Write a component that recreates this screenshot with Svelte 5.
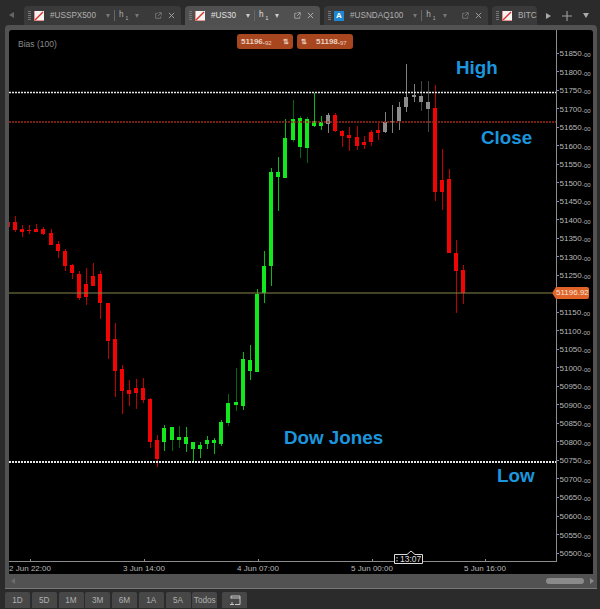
<script>
  // each candle: wick top, body top, body bottom, wick bottom (page pixels)
  const raw = [
    [221, 222, 227, 228], [216, 222, 230, 232], [225, 229, 232, 237], [225, 230, 231, 234], [224, 229, 232, 232],
    [227, 229, 234, 235], [229, 233, 245, 245], [241, 244, 251, 258], [249, 251, 266, 271], [264, 265, 273, 279],
    [271, 274, 298, 300], [268, 284, 297, 305], [263, 276, 286, 286], [271, 274, 303, 319], [303, 303, 341, 359],
    [323, 339, 371, 397], [365, 369, 391, 414], [380, 390, 394, 406], [379, 388, 393, 409], [378, 388, 400, 403],
    [398, 399, 442, 448], [435, 440, 459, 467], [425, 428, 442, 451], [427, 427, 440, 451], [426, 437, 440, 448],
    [427, 437, 444, 452], [442, 442, 449, 462], [442, 445, 449, 458], [436, 440, 444, 449], [438, 440, 443, 454],
    [420, 422, 444, 446], [394, 403, 423, 426], [368, 402, 405, 411], [352, 359, 406, 410], [345, 360, 371, 380],
    [289, 294, 372, 372], [251, 266, 293, 303], [168, 172, 266, 286], [157, 172, 177, 211], [119, 138, 178, 178],
    [100, 119, 140, 142], [116, 118, 147, 158], [117, 119, 148, 163], [93, 121, 126, 127], [116, 122, 126, 130],
    [113, 115, 124, 133], [113, 115, 131, 132], [130, 131, 136, 147], [127, 135, 138, 151], [126, 137, 146, 150],
    [136, 142, 145, 149], [130, 132, 142, 146], [123, 130, 133, 140], [112, 122, 132, 133], [105, 121, 122, 133],
    [102, 107, 121, 130], [64, 97, 107, 112], [84, 95, 97, 102], [81, 96, 102, 111], [81, 102, 109, 132],
    [85, 108, 192, 201], [149, 180, 192, 210], [169, 179, 253, 253], [240, 253, 271, 313], [265, 270, 293, 304]
  ];

  const dim = new Set([23, 24, 31, 32, 40, 41, 42, 58, 59]);

  function colour(i) {
    if (i <= 21) return 'red';
    if (i <= 44) return 'green';
    if (i === 45) return 'gray';
    if (i <= 52) return 'red';
    if (i <= 59) return 'gray';
    return 'red';
  }

  const candles = raw.map((c, i) => ({
    x: Math.round(7.9 + 7.116 * i),
    wt: c[0], bt: c[1], bb: c[2], wb: c[3],
    kind: colour(i),
    dim: dim.has(i)
  }));

  // 51200 sits behind the last price tag, so it isn't drawn
  const prices = Array.from({ length: 28 }, (_, i) => ({
    label: 51850 - i * 50,
    y: 53 + i * 18.52
  })).filter((p) => p.label !== 51200);

  const times = [
    { x: 30, label: '2 Jun 22:00' },
    { x: 144, label: '3 Jun 14:00' },
    { x: 258, label: '4 Jun 07:00' },
    { x: 372, label: '5 Jun 00:00' },
    { x: 485, label: '5 Jun 16:00' }
  ];

  const ranges = ['1D', '5D', '1M', '3M', '6M', '1A', '5A', 'Todos'];
</script>

{#snippet flag()}
  <svg class="icon" viewBox="0 0 10 10">
    <rect width="10" height="10" fill="#f4f4f4" />
    <path d="M0 0V10H10" fill="none" stroke="#d8342c" stroke-width="1" />
    <path d="M1 9L9 1" stroke="#d8342c" stroke-width="1.4" />
  </svg>
{/snippet}

{#snippet grip()}
  <span class="grip"></span>
{/snippet}

{#snippet period()}
  <span class="sep"></span>
  <span class="period">h<sub>1</sub></span>
  <span class="caret"></span>
{/snippet}

{#snippet actions()}
  <svg class="act" viewBox="0 0 8 8">
    <path d="M3 1.5H.8V7.2H6.5V5M4 .8H7.2V4M7 1L3.5 4.5" fill="none" stroke="currentColor" stroke-width=".8" />
  </svg>
  <svg class="act close" viewBox="0 0 8 8">
    <path d="M1 1L7 7M7 1L1 7" stroke="currentColor" stroke-width="1" />
  </svg>
{/snippet}

<div class="app">
  <div class="tabs">
    <span class="nav-left"></span>
    <div class="tab first">
      {@render grip()}
      {@render flag()}
      <span class="name">#USSPX500</span>
      <span class="caret"></span>
      {@render period()}
      <span class="grow"></span>
      {@render actions()}
    </div>
    <div class="tab active">
      {@render grip()}
      {@render flag()}
      <span class="name">#US30</span>
      <span class="caret"></span>
      {@render period()}
      <span class="grow"></span>
      {@render actions()}
    </div>
    <div class="tab third">
      {@render grip()}
      <span class="icon a-icon">A</span>
      <span class="name">#USNDAQ100</span>
      <span class="caret"></span>
      {@render period()}
      <span class="grow"></span>
      {@render actions()}
    </div>
    <div class="tab last">
      {@render grip()}
      {@render flag()}
      <span class="name">BITC</span>
    </div>
    <div class="tab-tools">
      <span class="play"></span>
      <svg class="plus" viewBox="0 0 10 10"><path d="M5 0V10M0 5H10" stroke="#a0a0a0" stroke-width="1.1" /></svg>
      <span class="drop"></span>
    </div>
  </div>

  <div class="panel">
    <div class="chart">
      <svg class="plot" viewBox="9 30 584 544" width="584" height="544">
        {#each candles as c}
          <rect x={c.x} y={c.wt} width="1" height={c.wb - c.wt} class="wick {c.kind}" class:dim={c.dim} />
          <rect x={c.x - 2} y={c.bt} width="4" height={Math.max(c.bb - c.bt, 1)} class="body {c.kind}" />
        {/each}

        <line x1="9" x2="556" y1="92.5" y2="92.5" class="dots white" />
        <line x1="9" x2="556" y1="122" y2="122" class="dots dark-red" />
        <line x1="9" x2="556" y1="462" y2="462" class="dots white thick" />
        <line x1="9" x2="552" y1="293" y2="293" class="last-price" />

        <line x1="556.5" x2="556.5" y1="30" y2="561.5" class="axis" />
        <line x1="9" x2="557" y1="561.5" y2="561.5" class="axis" />

        {#each prices as p}
          <line x1="557" x2="559" y1={p.y} y2={p.y} class="axis" />
          <text x="559.5" y={p.y + 3} class="tick">{p.label}.<tspan class="cents" dy="1">00</tspan></text>
        {/each}

        {#each times as t}
          <line x1={t.x} x2={t.x} y1="559" y2="562" class="axis" />
          <text x={t.x} y="571" class="tick middle">{t.label}</text>
        {/each}

        <text x="456" y="74" class="note">High</text>
        <text x="481" y="144" class="note">Close</text>
        <text x="284" y="444" class="note">Dow Jones</text>
        <text x="497" y="482" class="note">Low</text>

        <path d="M394.5 554.5H407L411 551L415 554.5H422.5V563.5H394.5Z" class="cross" />
        <path d="M397 557V558.5M397 560V561.5" stroke="#ddd" />
        <text x="400" y="562" class="cross-time">13:07</text>
      </svg>

      <span class="bias">Bias (100)</span>

      <div class="quotes">
        <div class="quote">51196.<small>92</small><i>⇅</i></div>
        <div class="quote"><i>⇅</i>51198.<small>97</small></div>
      </div>

      <div class="last-tag">51196.92</div>
    </div>

    <div class="scroll">
      <span class="arrow-left"></span>
      <span class="grow"></span>
      <span class="thumb"></span>
      <span class="arrow-right"></span>
    </div>
  </div>

  <div class="footer">
    {#each ranges as r}
      <button>{r}</button>
    {/each}
    <button class="calendar" aria-label="calendar">
      <svg viewBox="0 0 12 11" width="12" height="11">
        <path d="M2 3.5V1H11V9.5H6M2 3H11" fill="none" stroke="#c8c8c8" stroke-width="1" />
        <path d="M1 9.5H5M3 7V10" stroke="#c8c8c8" stroke-width="1" />
      </svg>
    </button>
  </div>
</div>

<style>
  :global(body) {
    margin: 0;
    background: #2b2b2b;
  }

  .app {
    width: 600px;
    height: 609px;
    display: flex;
    flex-direction: column;
    overflow: hidden;
    font-family: "Liberation Sans", Arial, sans-serif;
    color: #aaa;
  }

  .tabs {
    height: 25px;
    flex: none;
    display: flex;
    align-items: flex-end;
    gap: 4px;
    position: relative;
  }

  .nav-left {
    position: absolute;
    left: 9px;
    top: 12px;
    border: 3.5px solid transparent;
    border-right: 5px solid #666;
    border-left: 0;
  }

  .tab {
    height: 19px;
    display: flex;
    align-items: center;
    background: #3a3a3a;
    border-radius: 4px 4px 0 0;
    box-sizing: border-box;
    padding: 0 6px 0 4px;
    font-size: 8.2px;
    color: #b0b0b0;
    overflow: hidden;
    white-space: nowrap;
  }

  .first {
    margin-left: 24px;
    width: 157px;
  }

  .active {
    width: 135px;
    background: #505050;
    color: #e0e0e0;
  }

  .third {
    width: 164px;
  }

  .last {
    width: 45px;
    padding-right: 0;
  }

  .grip {
    width: 3px;
    height: 9px;
    flex: none;
    margin-right: 3px;
    background: repeating-linear-gradient(#777 0 1px, transparent 1px 2px);
  }

  .icon {
    width: 10px;
    height: 10px;
    flex: none;
    margin-right: 6px;
  }

  .a-icon {
    background: #1f86d2;
    color: #fff;
    font-size: 8px;
    font-weight: bold;
    line-height: 10px;
    text-align: center;
  }

  .name {
    flex: none;
    margin-right: 7px;
  }

  .caret {
    width: 0;
    height: 0;
    margin: 0 3px;
    border: 2.5px solid transparent;
    border-top: 4px solid #777;
    border-bottom: 0;
  }

  .active .caret {
    border-top-color: #ccc;
  }

  .sep {
    width: 1px;
    height: 11px;
    margin: 0 4px 0 1px;
    background: #666;
  }

  .period {
    margin-right: 4px;
  }

  .period sub {
    font-size: 5px;
    margin-left: 2px;
  }

  .grow {
    flex: 1;
  }

  .act {
    width: 7px;
    height: 7px;
    margin-left: 6px;
    color: #888;
  }

  .close {
    color: #aaa;
  }

  .active .act {
    color: #bbb;
  }

  .tab-tools {
    flex: 1;
    height: 19px;
    display: flex;
    align-items: center;
    padding-left: 5px;
    gap: 10px;
  }

  .play {
    border: 3.5px solid transparent;
    border-left: 5px solid #aaa;
    border-right: 0;
  }

  .plus {
    width: 10px;
    height: 10px;
    margin-left: 1px;
  }

  .drop {
    margin-left: 1px;
    border: 3px solid transparent;
    border-top: 5px solid #aaa;
    border-bottom: 0;
  }

  .panel {
    flex: none;
    margin: 0 3px 0 5px;
    padding: 5px 4px 0;
    background: #525252;
    border-radius: 4px 4px 0 0;
    border-bottom: 1px solid #777;
  }

  .chart {
    position: relative;
    height: 544px;
    background: #000;
    border-radius: 3px 3px 0 0;
    overflow: hidden;
  }

  .plot {
    display: block;
  }

  .wick.red { fill: #c00000; }
  .wick.green { fill: #0cb818; }
  .wick.gray { fill: #808080; }
  .wick.dim { opacity: 0.55; }
  .body { shape-rendering: crispEdges; }
  .wick { shape-rendering: crispEdges; }
  .body.red { fill: #f00404; }
  .body.green { fill: #12e81c; }
  .body.gray { fill: #8c8c8c; }

  .dots {
    stroke-width: 1.3;
    stroke-dasharray: 2 1;
  }

  .white { stroke: #e8e8e8; }
  .thick { stroke-width: 2; }
  .dark-red { stroke: #a02a1c; }

  .last-price {
    stroke: #85854a;
    stroke-width: 1;
  }

  .axis {
    stroke: #8c8c8c;
    stroke-width: 1;
    shape-rendering: crispEdges;
  }

  .tick {
    fill: #b8b8b8;
    font-size: 8px;
  }

  .cents {
    font-size: 6px;
  }

  .middle {
    text-anchor: middle;
  }

  .note {
    fill: #1b96de;
    font-size: 18.8px;
    font-weight: bold;
  }

  .cross {
    fill: #000;
    stroke: #ddd;
    stroke-width: 1;
  }

  .cross-time {
    fill: #ddd;
    font-size: 8.5px;
  }

  .bias {
    position: absolute;
    left: 9px;
    top: 9px;
    font-size: 8.5px;
    color: #8a8a8a;
  }

  .quotes {
    position: absolute;
    left: 228px;
    top: 4px;
    display: flex;
    gap: 4px;
  }

  .quote {
    width: 56px;
    height: 15px;
    box-sizing: border-box;
    padding: 0 4px;
    display: flex;
    align-items: center;
    justify-content: space-between;
    background: #a8471f;
    border-radius: 3px;
    color: #e8d0c0;
    font-size: 8px;
    font-weight: bold;
  }

  .quote small {
    font-size: 6px;
    font-weight: normal;
    margin-right: auto;
    padding-top: 2px;
  }

  .quote i {
    font-style: normal;
    font-size: 7px;
  }

  .quote i:first-child {
    margin-right: 9px;
  }

  .last-tag {
    position: absolute;
    left: 543px;
    top: 257px;
    width: 33px;
    height: 12px;
    padding-left: 4px;
    background: #e0642a;
    clip-path: polygon(0 50%, 4px 0, 100% 0, 100% 100%, 4px 100%);
    border-radius: 0 2px 2px 0;
    color: #f4e4d8;
    font-size: 8px;
    line-height: 12px;
  }

  .scroll {
    height: 14px;
    margin: 0 -4px;
    display: flex;
    align-items: center;
    padding: 0 3px 0 6px;
  }

  .arrow-left {
    border: 3px solid transparent;
    border-right: 4px solid #6c6c6c;
    border-left: 0;
  }

  .arrow-right {
    margin-left: 6px;
    border: 3px solid transparent;
    border-left: 4px solid #8a8a8a;
    border-right: 0;
  }

  .thumb {
    width: 38px;
    height: 6px;
    background: #8a8a8a;
    border-radius: 3px;
  }

  .footer {
    display: flex;
    gap: 1.75px;
    margin: 3px 0 0 5px;
  }

  button {
    width: 25px;
    height: 16px;
    padding: 0;
    border: 0;
    background: #474747;
    border-radius: 2px 2px 0 0;
    color: #b0b0b0;
    font-family: inherit;
    font-size: 8.2px;
  }

  .calendar {
    margin-left: 3px;
    display: flex;
    align-items: center;
    justify-content: center;
  }
</style>
